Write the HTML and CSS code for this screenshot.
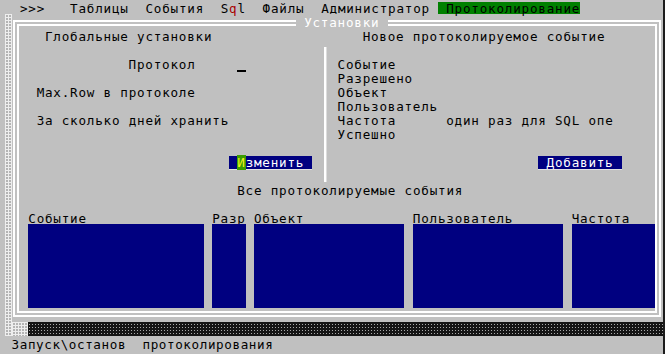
FILE: index.html
```html
<!DOCTYPE html>
<html lang="ru">
<head>
<meta charset="utf-8">
<title>Установки</title>
<link rel="stylesheet" href="styles.css">
</head>
<body>
<div class="screen">
  <div class="menu t">  &gt;&gt;&gt;   Таблицы  События  S<span class="hot">q</span>l  Файлы  Администратор</div>
  <div class="menu-active"> Протоколирование</div>

  <div class="shade-left"></div>
  <div class="shade-corner"></div>
  <div class="shade-bottom"></div>

  <div class="frame"></div>
  <div class="title t"> Установки </div>

  <div class="h-global t">Глобальные установки</div>
  <div class="h-new t">Новое протоколируемое событие</div>

  <div class="l-proto t">Протокол</div>
  <div class="cursor"></div>
  <div class="l-max t">Max.Row в протоколе</div>
  <div class="l-days t">За сколько дней хранить</div>

  <div class="divider"></div>

  <div class="fields t"><div>Событие</div><div>Разрешено</div><div>Объект</div><div>Пользователь</div><div>Частота</div><div>Успешно</div></div>
  <div class="freq-val t">один раз для SQL опе</div>

  <div class="btn btn-edit"> <span class="hk">И</span>зменить </div>
  <div class="btn btn-add"> Добавить </div>

  <div class="h-all t">Все протоколируемые события</div>

  <div class="tcol tc-event"><div class="th t">Событие</div><div class="tbox"></div></div>
  <div class="tcol tc-perm"><div class="th t">Разр</div><div class="tbox"></div></div>
  <div class="tcol tc-obj"><div class="th t">Объект</div><div class="tbox"></div></div>
  <div class="tcol tc-user"><div class="th t">Пользователь</div><div class="tbox"></div></div>
  <div class="tcol tc-freq"><div class="th t">Частота</div><div class="tbox"></div></div>

  <div class="status t">Запуск\останов  протоколирования</div>
</div>
</body>
</html>
```

FILE: styles.css
```css
* { box-sizing: border-box; }

html, body {
  margin: 0;
  background: #ffffff;
}

.screen {
  width: 665px;
  height: 354px;
  background: #c0c0c0;
  border-right: 2px solid #1c1c1c;
  padding-left: 3.2px;
  overflow: hidden;
  display: grid;
  grid-template-columns: repeat(80, 8.37px);
  grid-template-rows: repeat(25, 14px);
  font-family: "DejaVu Sans Mono", monospace;
  font-size: 12.6px;
  letter-spacing: 0.785px;
  line-height: 14px;
  color: #000;
  white-space: pre;
}

.t { padding-top: 1.5px; }

/* menu */
.menu { grid-row: 1; grid-column: 1 / 53; }
.hot { color: #a80000; }
.menu-active {
  grid-row: 1;
  grid-column: 53 / span 17;
  background: #008000;
  margin-top: 2px;
  height: 12px;
}

/* shadows */
.shade-left, .shade-corner {
  background-color: #eeeeee;
  background-image:
    linear-gradient(#eeeeee 1px, transparent 1px),
    linear-gradient(90deg, #eeeeee 1px, #b4b4b4 1px);
  background-size: 3px 3px;
}
.shade-left { grid-row: 2 / 25; grid-column: 1; margin-left: 1.8px; }
.shade-corner { grid-row: 24; grid-column: 2 / 4; }
.shade-bottom {
  grid-row: 24;
  grid-column: 4 / 81;
  background-color: #141414;
  background-image:
    linear-gradient(#141414 2px, transparent 2px),
    linear-gradient(90deg, #141414 1px, #a8a8a8 1px, #a8a8a8 2px, #141414 2px);
  background-size: 3px 3px;
}

/* frame */
.frame {
  grid-row: 2 / 24;
  grid-column: 2 / 80;
  margin: 5.5px 2.9px 5px 1.4px;
  border: 6px double #ffffff;
}
.title {
  grid-row: 2;
  grid-column: 36 / span 11;
  background: #c0c0c0;
  color: #ffffff;
}

.h-global { grid-row: 3; grid-column: 6 / span 20; }
.h-new { grid-row: 3; grid-column: 44 / span 29; }

.l-proto { grid-row: 5; grid-column: 16 / span 8; }
.cursor {
  grid-row: 5;
  grid-column: 29;
  margin-top: 14px;
  height: 2px;
  background: #000;
}
.l-max { grid-row: 7; grid-column: 5 / span 19; }
.l-days { grid-row: 9; grid-column: 5 / span 23; }

.divider {
  grid-row: 4 / 14;
  grid-column: 39;
  justify-self: center;
  width: 3px;
  margin-top: 5px;
  background: linear-gradient(90deg, #ffffff 2px, #dcdcdc 2px);
}

.fields { grid-row: 5 / 11; grid-column: 41 / span 12; }
.freq-val { grid-row: 9; grid-column: 54 / span 20; }

.btn {
  grid-row: 12;
  margin-top: 2px;
  height: 13px;
  background: #000080;
  color: #ffffff;
  box-shadow: 0 1px 0 #e2e2e2;
}
.btn-edit { grid-column: 28 / span 10; }
.btn-add { grid-column: 65 / span 10; }
.hk { background: #3c9c00; color: #f0f020; }

.h-all { grid-row: 14; grid-column: 29 / span 27; }

/* table */
.tcol {
  grid-row: 16 / 23;
  display: flex;
  flex-direction: column;
}
.th { height: 14px; }
.tbox { flex: 1; background: #000080; }
.tc-event { grid-column: 4 / 25; }
.tc-perm { grid-column: 26 / 30; }
.tc-obj { grid-column: 31 / 49; }
.tc-user { grid-column: 50 / 68; }
.tc-freq { grid-column: 69 / 79; }

.status {
  grid-row: 25;
  grid-column: 2 / 80;
  letter-spacing: 0.6px;
}
```
